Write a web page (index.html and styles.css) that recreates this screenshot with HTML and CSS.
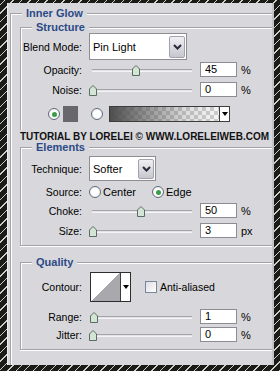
FILE: index.html
```html
<!DOCTYPE html>
<html lang="en">
<head>
  <meta charset="UTF-8">
  <meta name="viewport" content="width=device-width, initial-scale=1.0">
  <title>Inner Glow</title>
  <link rel="stylesheet" href="styles.css">
</head>
<body>
  <div class="panel">
    <div class="group outer">
      <span class="group-title">Inner Glow</span>

      <div class="group structure">
        <span class="group-title">Structure</span>
        <div class="row row-blend">
          <span class="label">Blend Mode:</span>
          <div class="select select-blend">
            <span class="select-text">Pin Light</span>
            <span class="select-btn"><svg width="9" height="6" viewBox="0 0 9 6"><path d="M1 1L4.5 4.5L8 1" fill="none" stroke="#2a2a3a" stroke-width="2"/></svg></span>
          </div>
        </div>
        <div class="row row-opacity">
          <span class="label">Opacity:</span>
          <div class="slider">
            <svg class="thumb" style="--v:45" width="8" height="11" viewBox="0 0 8 11"><path d="M0.5 10.5V4L4 0.5L7.5 4V10.5Z" fill="#d3e6d6" stroke="#5b6d61"/></svg>
          </div>
          <div class="num">45</div><span class="unit">%</span>
        </div>
        <div class="row row-noise">
          <span class="label">Noise:</span>
          <div class="slider">
            <svg class="thumb" style="--v:0" width="8" height="11" viewBox="0 0 8 11"><path d="M0.5 10.5V4L4 0.5L7.5 4V10.5Z" fill="#d3e6d6" stroke="#5b6d61"/></svg>
          </div>
          <div class="num">0</div><span class="unit">%</span>
        </div>
        <div class="row row-color">
          <span class="radio on"></span>
          <span class="swatch"></span>
          <span class="radio radio-grad"></span>
          <div class="gradient">
            <span class="gradient-fill"></span>
            <span class="mini-btn"><span class="tri"></span></span>
          </div>
        </div>
      </div>

      <div class="watermark">TUTORIAL BY LORELEI © WWW.LORELEIWEB.COM</div>

      <div class="group elements">
        <span class="group-title">Elements</span>
        <div class="row row-technique">
          <span class="label">Technique:</span>
          <div class="select select-technique">
            <span class="select-text">Softer</span>
            <span class="select-btn"><svg width="9" height="6" viewBox="0 0 9 6"><path d="M1 1L4.5 4.5L8 1" fill="none" stroke="#2a2a3a" stroke-width="2"/></svg></span>
          </div>
        </div>
        <div class="row row-source">
          <span class="label">Source:</span>
          <span class="radio"></span><span class="radio-text">Center</span>
          <span class="radio on radio-edge"></span><span class="radio-text">Edge</span>
        </div>
        <div class="row row-choke">
          <span class="label">Choke:</span>
          <div class="slider">
            <svg class="thumb" style="--v:50" width="8" height="11" viewBox="0 0 8 11"><path d="M0.5 10.5V4L4 0.5L7.5 4V10.5Z" fill="#d3e6d6" stroke="#5b6d61"/></svg>
          </div>
          <div class="num">50</div><span class="unit">%</span>
        </div>
        <div class="row row-size">
          <span class="label">Size:</span>
          <div class="slider">
            <svg class="thumb" style="--v:0" width="8" height="11" viewBox="0 0 8 11"><path d="M0.5 10.5V4L4 0.5L7.5 4V10.5Z" fill="#d3e6d6" stroke="#5b6d61"/></svg>
          </div>
          <div class="num">3</div><span class="unit">px</span>
        </div>
      </div>

      <div class="group quality">
        <span class="group-title">Quality</span>
        <div class="row row-contour">
          <span class="label">Contour:</span>
          <div class="contour">
            <span class="contour-curve"></span>
            <span class="mini-btn"><span class="tri"></span></span>
          </div>
          <span class="check"></span><span>Anti-aliased</span>
        </div>
        <div class="row row-range">
          <span class="label">Range:</span>
          <div class="slider">
            <svg class="thumb" style="--v:1" width="8" height="11" viewBox="0 0 8 11"><path d="M0.5 10.5V4L4 0.5L7.5 4V10.5Z" fill="#d3e6d6" stroke="#5b6d61"/></svg>
          </div>
          <div class="num">1</div><span class="unit">%</span>
        </div>
        <div class="row row-jitter">
          <span class="label">Jitter:</span>
          <div class="slider">
            <svg class="thumb" style="--v:0" width="8" height="11" viewBox="0 0 8 11"><path d="M0.5 10.5V4L4 0.5L7.5 4V10.5Z" fill="#d3e6d6" stroke="#5b6d61"/></svg>
          </div>
          <div class="num">0</div><span class="unit">%</span>
        </div>
      </div>
    </div>
  </div>
</body>
</html>
```

FILE: styles.css
```css
html {
  background: repeating-linear-gradient(135deg, #1b1b18 0 3px, #cfcfc6 3px 4px, #1b1b18 4px 6px);
}
body {
  margin: 0;
  width: 280px;
  height: 371px;
  overflow: hidden;
  padding-top: 3px;
  box-sizing: border-box;
  font-family: "Liberation Sans", Arial, sans-serif;
  font-size: 10.5px;
  color: #000;
}
.panel {
  margin: 0 6px 0 7px;
  height: 362px;
  box-sizing: border-box;
  padding: 10px 0 0 2px;
  background: #d8d8dc;
  border-left: 1px solid #ececf0;
  border-right: 2px solid #c4c4c8;
  overflow: hidden;
}

/* group boxes */
.group {
  position: relative;
  border: 1px solid #a2a2a8;
  border-right: none;
  box-shadow: inset 1px 1px 0 #fff, 0 1px 0 #fff;
}
.group-title {
  position: absolute;
  top: -6px;
  left: 11px;
  padding: 0 4px;
  background: #d8d8dc;
  font-size: 11px;
  font-weight: bold;
  line-height: 10px;
  color: #2c4a86;
}
.outer {
  height: 400px;
  padding: 13px 0 0 9px;
  border-bottom: none;
  box-shadow: inset 1px 1px 0 #fff;
}
.structure {
  padding-bottom: 8px;
  border-bottom: none;
  box-shadow: inset 1px 1px 0 #fff;
}
.elements {
  margin-top: 5px;
  padding-bottom: 7px;
}
.quality {
  margin-top: 16px;
  padding-bottom: 7px;
}

.watermark {
  margin-top: 2px;
  line-height: 10px;
  font-size: 10px;
  font-weight: bold;
  color: #111;
}

/* rows */
.row {
  display: flex;
  align-items: center;
  height: 15px;
}
.label {
  flex: none;
  width: 61px;
  margin-right: 7px;
  text-align: right;
}
.row-blend { margin-top: 5px; height: 27px; }
.row-opacity { margin-top: 2px; }
.row-noise { margin-top: 5px; }
.row-color { margin-top: 9px; height: 16px; padding-left: 27px; }
.row-technique { margin-top: 8px; height: 25px; }
.row-source { margin-top: 4px; height: 14px; }
.row-choke { margin-top: 4px; }
.row-size { margin-top: 5px; }
.row-contour { margin-top: 9px; height: 30px; }
.row-range { margin-top: 7px; }
.row-jitter { margin-top: 3px; }

/* dropdowns */
.select {
  display: flex;
  align-items: center;
  box-sizing: border-box;
  height: 100%;
  border: 1px solid #8d8d94;
  background: #fff;
}
.select-blend { width: 98px; }
.select-technique { width: 67px; }
.select-text {
  flex: 1;
  padding-left: 3px;
  font-size: 11px;
}
.select-btn {
  align-self: stretch;
  display: flex;
  align-items: center;
  justify-content: center;
  width: 16px;
  margin: 2px 1px 1px 0;
  box-sizing: border-box;
  border: 1px solid #a3a3b0;
  border-radius: 2px;
  background: linear-gradient(#f0f0f4, #c6c6ce);
}

/* sliders */
.slider {
  position: relative;
  flex: none;
  width: 111px;
  height: 15px;
}
.slider::before {
  content: "";
  position: absolute;
  left: 3px;
  top: 7px;
  width: 100px;
  height: 1px;
  border-top: 1px solid #a4a4a8;
  border-bottom: 1px solid #f4f4f6;
  background: #e4e4e8;
}
.thumb {
  position: absolute;
  top: 3px;
  left: calc(var(--v) * 0.95px);
}
.num {
  flex: none;
  box-sizing: border-box;
  width: 37px;
  height: 15px;
  padding-left: 4px;
  border: 1px solid #8c8c92;
  background: #fff;
  line-height: 13px;
  font-size: 11px;
}
.unit {
  margin-left: 4px;
  font-size: 11px;
}

/* radios, swatch, gradient */
.radio {
  flex: none;
  position: relative;
  box-sizing: border-box;
  width: 12px;
  height: 12px;
  border: 1px solid #5e6c7a;
  border-radius: 50%;
  background: radial-gradient(#ffffff 40%, #e2e2e8);
}
.radio.on::after {
  content: "";
  position: absolute;
  left: 2.5px;
  top: 2.5px;
  width: 5px;
  height: 5px;
  border-radius: 50%;
  background: #3c9a48;
}
.radio-text { margin-left: 2px; font-size: 11px; }
.radio-edge { margin-left: 16px; }
.swatch {
  width: 15px;
  height: 16px;
  margin-left: 3px;
  background: #68686c;
}
.radio-grad { margin-left: 13px; }
.gradient {
  display: flex;
  box-sizing: border-box;
  width: 121px;
  height: 16px;
  margin-left: 6px;
  border: 1px solid #3c3c3c;
}
.gradient-fill {
  flex: 1;
  background:
    linear-gradient(to right, #4e4e4e, rgba(78, 78, 78, 0.15) 70%, rgba(78, 78, 78, 0)),
    repeating-conic-gradient(#cdcdcd 0 25%, #f6f6f6 0 50%) 0 0 / 8px 8px;
}
.mini-btn {
  display: flex;
  align-items: center;
  justify-content: center;
  width: 9px;
  border-left: 1px solid #3c3c3c;
  background: #fff;
}
.tri {
  width: 0;
  height: 0;
  border-left: 3px solid transparent;
  border-right: 3px solid transparent;
  border-top: 4px solid #000;
}

/* contour */
.contour {
  display: flex;
  box-sizing: border-box;
  width: 41px;
  height: 30px;
  margin-left: 1px;
  border: 1px solid #2e2e2e;
}
.contour-curve {
  flex: 1;
  background: linear-gradient(to bottom right, #fff 50%, #a9a9ad 50%);
}
.check {
  box-sizing: border-box;
  width: 12px;
  height: 12px;
  margin: 0 3px 0 14px;
  border: 1px solid #78889a;
  background: linear-gradient(135deg, #dedee6, #fff);
}
```
